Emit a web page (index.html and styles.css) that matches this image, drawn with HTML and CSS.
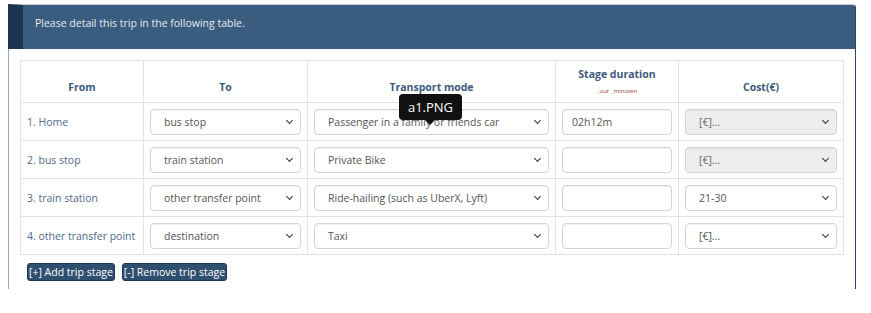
FILE: index.html
```html
<!DOCTYPE html>
<html lang="en">
<head>
  <meta charset="UTF-8">
  <meta name="viewport" content="width=device-width, initial-scale=1.0">
  <title>Trip stages</title>
<link rel="stylesheet" href="styles.css">
</head>
<body>
  <div class="panel">
    <div class="panel-heading">Please detail this trip in the following table.</div>

    <div class="panel-body">
      <table class="stages">
        <colgroup>
          <col class="c-from">
          <col class="c-to">
          <col class="c-mode">
          <col class="c-dur">
          <col class="c-cost">
        </colgroup>
        <thead>
          <tr>
            <th>From</th>
            <th>To</th>
            <th>Transport mode</th>
            <th class="dur-head">
              Stage duration
              <div class="hint"><span class="mark">_</span>uur <span class="mark">_</span>minuten</div>
            </th>
            <th>Cost(&euro;)</th>
          </tr>
        </thead>
        <tbody>
          <tr>
            <td>1. Home</td>
            <td><div class="pick"><select><option>bus stop</option></select></div></td>
            <td class="mode-cell">
              <div class="pick"><select><option>Passenger in a family or friends car</option></select></div>
              <div class="tip">a1.PNG</div>
            </td>
            <td><input type="text" value="02h12m"></td>
            <td><div class="pick"><select disabled><option>[&euro;]...</option></select></div></td>
          </tr>
          <tr>
            <td>2. bus stop</td>
            <td><div class="pick"><select><option>train station</option></select></div></td>
            <td><div class="pick"><select><option>Private Bike</option></select></div></td>
            <td><input type="text"></td>
            <td><div class="pick"><select disabled><option>[&euro;]...</option></select></div></td>
          </tr>
          <tr>
            <td>3. train station</td>
            <td><div class="pick"><select><option>other transfer point</option></select></div></td>
            <td><div class="pick"><select><option>Ride-hailing (such as UberX, Lyft)</option></select></div></td>
            <td><input type="text"></td>
            <td><div class="pick"><select><option>21-30</option></select></div></td>
          </tr>
          <tr>
            <td>4. other transfer point</td>
            <td><div class="pick"><select><option>destination</option></select></div></td>
            <td><div class="pick"><select><option>Taxi</option></select></div></td>
            <td><input type="text"></td>
            <td><div class="pick"><select><option>[&euro;]...</option></select></div></td>
          </tr>
        </tbody>
      </table>

      <div class="actions">
        <button class="stage-btn">[+] Add trip stage</button>
        <button class="stage-btn">[-] Remove trip stage</button>
      </div>
    </div>
  </div>
</body>
</html>
```

FILE: styles.css
```css
body {
  margin: 0;
  background: #fff;
  font-family: "Open Sans", Arial, sans-serif;
  font-size: 10.5px;
  color: #555;
}

.panel {
  width: 848px;
  margin: 4px 0 0 8px;
}

.panel-heading {
  background-color: #3a5c7e;
  border-left: 15px solid #1c3452;
  border-top: 1px solid #c9d0d8;
  border-right: 1px solid #2a476a;
  border-radius: 0 4px 0 0;
  color: #e4ebf2;
  height: 45px;
  box-sizing: border-box;
  padding: 10px 12px 0;
  line-height: 16px;
}

.panel-body {
  border-left: 1px solid #9aa6b4;
  border-right: 1px solid #2a476a;
  padding: 11px 11px 8px;
}

.stages {
  width: 823px;
  border-collapse: collapse;
  table-layout: fixed;
}

.c-from { width: 123px; }
.c-to { width: 164px; }
.c-mode { width: 248px; }
.c-dur { width: 123px; }
.c-cost { width: 165px; }

.stages th,
.stages td {
  border: 1px solid #e2e2e2;
}

.stages th {
  height: 34px;
  vertical-align: bottom;
  padding: 0 6px 7px;
  color: #3b5a7b;
  font-weight: bold;
  text-align: center;
  line-height: 15px;
}

.dur-head {
  padding-bottom: 6px;
}

.hint {
  font-size: 6px;
  line-height: 8px;
  font-weight: normal;
  color: #9b3b3b;
  margin-top: 5px;
}

.hint .mark {
  color: #e07a30;
}

.stages td {
  height: 37px;
  padding: 0 6px;
  color: #50698a;
  vertical-align: middle;
  white-space: nowrap;
}

.pick {
  position: relative;
}

/* small chevron drawn over the select */
.pick::after {
  content: '';
  position: absolute;
  right: 9px;
  top: 9px;
  width: 4px;
  height: 4px;
  border-right: 1.5px solid #333;
  border-bottom: 1.5px solid #333;
  transform: rotate(45deg);
  pointer-events: none;
}

.stages select,
.stages input {
  display: block;
  width: 100%;
  height: 26px;
  box-sizing: border-box;
  border: 1px solid #d4d4d4;
  border-radius: 4px;
  background-color: #fff;
  font-family: "Open Sans", Arial, sans-serif;
  font-size: 10.5px;
  color: #555;
  box-shadow: inset 0 1px 1px rgba(0, 0, 0, 0.06);
}

.stages select {
  appearance: none;
  -webkit-appearance: none;
  padding: 0 20px 0 13px;
}

.stages input {
  padding: 0 9px;
}

.stages select:disabled {
  background-color: #eee;
  color: #666;
  opacity: 1;
}

.mode-cell {
  position: relative;
}

.tip {
  position: absolute;
  left: 91px;
  top: -9px;
  width: 63px;
  height: 26px;
  line-height: 26px;
  background: #111;
  color: #fff;
  font-size: 13px;
  text-align: center;
  border-radius: 4px;
}

.tip::after {
  content: '';
  position: absolute;
  left: 26px;
  bottom: -5px;
  border-left: 5px solid transparent;
  border-right: 5px solid transparent;
  border-top: 5px solid #111;
}

.actions {
  display: flex;
  gap: 7px;
  margin: 8px 0 0 7px;
}

.stage-btn {
  height: 18px;
  padding: 0 1px;
  background-color: #2f4f70;
  border: 1px solid #1e3958;
  border-radius: 3px;
  color: #fff;
  font-family: "Open Sans", Arial, sans-serif;
  font-size: 10.5px;
  line-height: 16px;
}
```
